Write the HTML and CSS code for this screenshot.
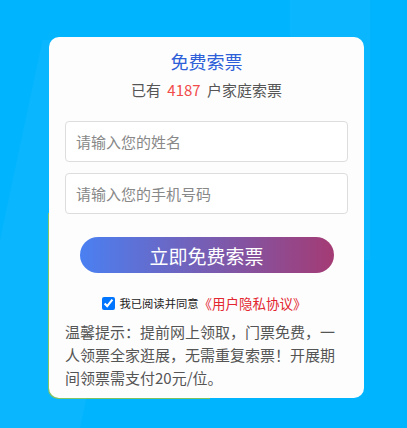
FILE: index.html
```html
<!DOCTYPE html>
<html lang="zh-CN">

<head>
    <meta charset="UTF-8">
    <meta name="viewport" content="width=device-width, initial-scale=1.0">
    <title>免费索票</title>
    <link rel="stylesheet" href="styles.css">
</head>

<body>
    <div class="page">
        <div class="bg-shape shape-a"></div>
        <div class="bg-shape shape-b"></div>

        <div class="card">
            <h2 class="title">免费索票</h2>
            <p class="count">已有 <span class="num">4187</span> 户家庭索票</p>

            <form class="form">
                <input type="text" class="field" placeholder="请输入您的姓名">
                <input type="text" class="field" placeholder="请输入您的手机号码">
                <button type="button" class="submit">立即免费索票</button>
                <label class="agree">
                    <input type="checkbox" checked>
                    <span>我已阅读并同意</span><a href="#" class="policy">《用户隐私协议》</a>
                </label>
            </form>

            <p class="tip">温馨提示：提前网上领取，门票免费，一人领票全家逛展，无需重复索票！开展期间领票需支付20元/位。</p>
        </div>
    </div>
</body>

</html>
```

FILE: styles.css
```css
body {
    margin: 0;
    padding: 0;
    font-family: "Microsoft YaHei", "Noto Sans CJK SC", sans-serif;
    background-color: #00b4fe;
}

.page {
    position: relative;
    height: 428px;
    overflow: hidden;
    padding-top: 37px;
    box-sizing: border-box;
}

/* 背景里淡淡的色块 */
.bg-shape {
    position: absolute;
    background: rgba(255, 255, 255, 0.04);
}

.shape-a {
    left: 290px;
    top: 0;
    width: 80px;
    height: 260px;
}

.shape-b {
    left: 0;
    top: 40px;
    width: 120px;
    height: 400px;
    transform: skewX(-12deg);
}

.card {
    position: relative;
    width: 315px;
    height: 361px;
    margin-left: 49px;
    box-sizing: border-box;
    padding: 12px 16px 0;
    background-color: #fdfdfd;
    border-radius: 10px;
}

/* 左下角的绿色边 */
.card::before {
    content: "";
    position: absolute;
    z-index: -1;
    left: -1px;
    top: 176px;
    width: 162px;
    height: 186px;
    background-color: #7cc35e;
    border-radius: 0 0 0 10px;
}

.title {
    margin: 0;
    text-align: center;
    font-size: 18px;
    font-weight: normal;
    line-height: 24px;
    color: #2d5fd8;
}

.count {
    margin: 7px 0 0;
    text-align: center;
    font-size: 15px;
    line-height: 20px;
    color: #555;
}

.num {
    color: #f24b4b;
    padding: 0 3px;
}

.form {
    display: flex;
    flex-direction: column;
    align-items: center;
    margin-top: 21px;
}

.field {
    width: 100%;
    height: 41px;
    box-sizing: border-box;
    margin-bottom: 11px;
    padding: 0 10px;
    border: 1px solid #ddd;
    border-radius: 4px;
    background: #fff;
    font-family: inherit;
    font-size: 15px;
    color: #333;
}

.field::placeholder {
    color: #888;
}

.submit {
    width: 254px;
    height: 36px;
    margin-top: 12px;
    border: none;
    border-radius: 18px;
    background: linear-gradient(to right, #4a80f2, #a43b74);
    color: #fff;
    font-family: inherit;
    font-size: 19px;
    cursor: pointer;
}

.agree {
    display: flex;
    align-items: center;
    margin-top: 20px;
    margin-left: -4px;
    font-size: 11.3px;
    color: #222;
}

.agree input {
    width: 13px;
    height: 13px;
    margin: 0 4px 0 0;
}

.policy {
    color: #e3262f;
    font-size: 13.5px;
    text-decoration: none;
}

.tip {
    margin: 7px 0 0;
    font-size: 15px;
    line-height: 23px;
    color: #555;
}
```
